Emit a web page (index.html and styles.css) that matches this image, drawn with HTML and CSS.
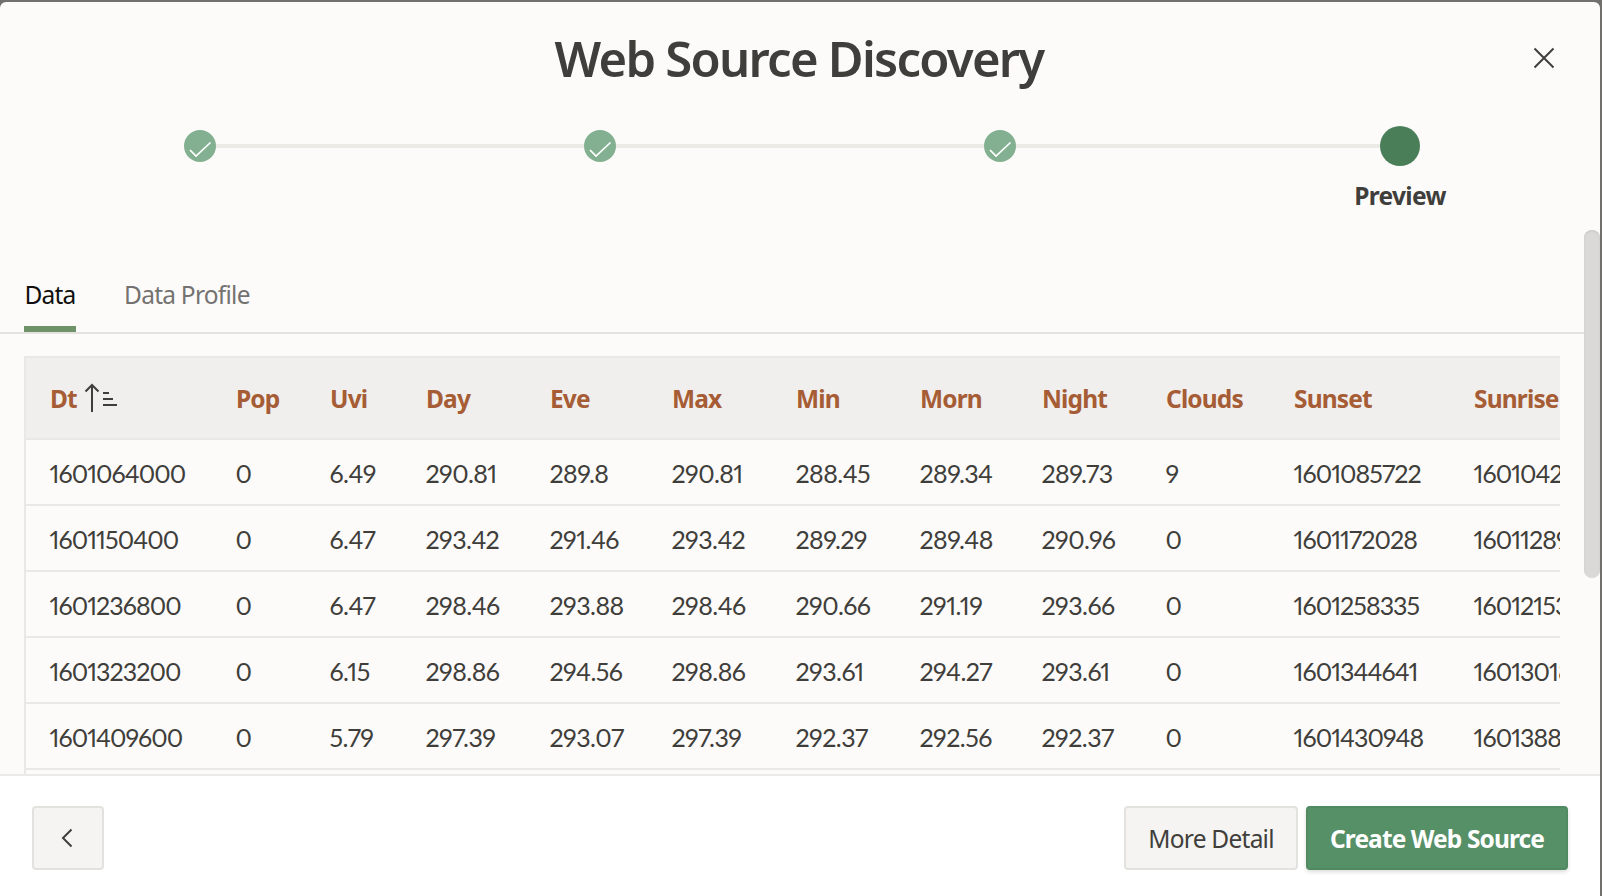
FILE: index.html
```html
<!DOCTYPE html>
<html lang="en">
<head>
<meta charset="utf-8">
<title>Web Source Discovery</title>
<link rel="stylesheet" href="styles.css">
</head>
<body>
<main class="dialog">
  <header class="dialog-head">
    <h1 class="title">Web Source Discovery</h1>
    <button class="close" aria-label="Close"><svg width="22" height="22" viewBox="0 0 22 22"><path d="M1.5 1.5 20.500 20.500M20.500 1.500 1.500 20.500"/></svg></button>
  </header>
  <ol class="steps">
    <li class="step"><span class="dot"><svg width="32" height="32" viewBox="0 0 32 32"><path d="M6 20 12 26 26.500 12.500"/></svg></span></li>
    <li class="step"><span class="dot"><svg width="32" height="32" viewBox="0 0 32 32"><path d="M6 20 12 26 26.500 12.500"/></svg></span></li>
    <li class="step"><span class="dot"><svg width="32" height="32" viewBox="0 0 32 32"><path d="M6 20 12 26 26.500 12.500"/></svg></span></li>
    <li class="step"><span class="dot current"></span><span class="step-label">Preview</span></li>
  </ol>
  <section class="body">
    <div class="content">
      <nav class="tabs"><a class="tab active">Data</a><a class="tab profile">Data Profile</a></nav>
      <div class="report">
        <table class="grid">
          <colgroup><col class="w-dt"><col class="w-pop"><col class="w-uvi"><col class="w-wide"><col class="w-mid"><col class="w-wide"><col class="w-wide"><col class="w-mid"><col class="w-wide"><col class="w-clouds"><col class="w-sun"><col class="w-sun"></colgroup>
          <thead><tr><th><span class="sorted">Dt<svg width="34" height="30" viewBox="0 0 34 30"><path d="M8 29V2M1.500 8.500 8 2l6.500 6.500M19 10h6M19 16h10M19 22h14"/></svg></span></th><th>Pop</th><th>Uvi</th><th>Day</th><th>Eve</th><th>Max</th><th>Min</th><th>Morn</th><th>Night</th><th>Clouds</th><th>Sunset</th><th>Sunrise</th></tr></thead>
          <tbody>
            <tr><td>1601064000</td><td>0</td><td>6.49</td><td>290.81</td><td>289.8</td><td>290.81</td><td>288.45</td><td>289.34</td><td>289.73</td><td>9</td><td>1601085722</td><td>1601042</td></tr>
            <tr><td>1601150400</td><td>0</td><td>6.47</td><td>293.42</td><td>291.46</td><td>293.42</td><td>289.29</td><td>289.48</td><td>290.96</td><td>0</td><td>1601172028</td><td>16011289</td></tr>
            <tr><td>1601236800</td><td>0</td><td>6.47</td><td>298.46</td><td>293.88</td><td>298.46</td><td>290.66</td><td>291.19</td><td>293.66</td><td>0</td><td>1601258335</td><td>16012153</td></tr>
            <tr><td>1601323200</td><td>0</td><td>6.15</td><td>298.86</td><td>294.56</td><td>298.86</td><td>293.61</td><td>294.27</td><td>293.61</td><td>0</td><td>1601344641</td><td>16013018</td></tr>
            <tr><td>1601409600</td><td>0</td><td>5.79</td><td>297.39</td><td>293.07</td><td>297.39</td><td>292.37</td><td>292.56</td><td>292.37</td><td>0</td><td>1601430948</td><td>1601388</td></tr>
            <tr><td></td><td></td><td></td><td></td><td></td><td></td><td></td><td></td><td></td><td></td><td></td><td></td></tr>
          </tbody>
        </table>
      </div>
    </div>
    <div class="scrollbar"><div class="thumb"></div></div>
  </section>
  <footer class="foot">
    <button class="btn back" aria-label="Back"><svg width="12" height="20" viewBox="0 0 12 20"><path d="M10.500 1.500 2 10l8.500 8.500"/></svg></button>
    <button class="btn detail">More Detail</button>
    <button class="btn create">Create Web Source</button>
  </footer>
</main>
</body>
</html>
```
FILE: styles.css
```css
* { box-sizing: border-box; }
body { margin: 0; height: 896px; overflow: hidden; background: #72706c; padding: 2px 2px 0 0; font-family: "Noto Sans", "Open Sans", sans-serif; font-size: 24.5px; color: #403e3b; }
svg { display: block; fill: none; stroke: currentColor; stroke-width: 2; }
button { font: inherit; color: inherit; padding: 0; }
.dialog { height: 894px; display: flex; flex-direction: column; background: #fcfbf9; border-radius: 6px 6px 0 0; overflow: hidden; }
.dialog-head { height: 114px; padding-bottom: 2px; flex: none; display: grid; grid-template-columns: 80px 1fr 80px; align-items: center; }
.title { grid-column: 2; margin: 0 2px 0 0; text-align: center; font-size: 49px; line-height: 68px; font-weight: 650; letter-spacing: -1.75px; }
.close { justify-self: start; margin-left: 13px; border: 0; background: none; }
.steps { flex: none; list-style: none; margin: 0; padding: 8px 0 0; height: 112px; display: grid; grid-template-columns: repeat(4, 1fr); background: linear-gradient(#ebeae7, #ebeae7) 200px 28px / 1200px 4px no-repeat; }
.step { display: flex; flex-direction: column; align-items: center; }
.dot { width: 32px; height: 32px; margin: 6px 0; border-radius: 50%; background: #84b092; color: #fff; }
.dot svg { stroke-width: 1.7; }
.current { width: 40px; height: 40px; margin: 2px 0; background: #4a7e59; }
.step-label { font-weight: 700; line-height: 34px; margin-top: 11px; letter-spacing: -.7px; }
.body { flex: 1; min-height: 0; display: flex; overflow: hidden; }
.content { flex: 1; min-width: 0; }
.tabs { height: 106px; padding: 0 24px; display: flex; align-items: flex-end; gap: 48px; border-bottom: 2px solid #e3e2df; }
.tab { height: 60px; line-height: 46px; letter-spacing: -.75px; border-bottom: 6px solid transparent; color: #747270; }
.active { width: 52px; text-align: center; color: #100f0e; border-color: #6f9268; }
.report { margin: 22px 24px 0; overflow: hidden; border: 2px solid #e9e8e6; border-right: 0; border-bottom: 0; }
.grid { width: 1604px; table-layout: fixed; border-collapse: separate; border-spacing: 0; }
.grid th, .grid td { padding: 0 0 0 24px; text-align: left; white-space: nowrap; border-bottom: 2px solid #e9e8e6; }
.grid th { height: 82px; background: #f0efed; color: #a65d35; font-weight: 700; letter-spacing: -.85px; }
.grid td { height: 66px; padding: 1px 0 0 23.500px; font-family: Lato, "Noto Sans", sans-serif; font-size: 25px; font-variant-numeric: proportional-nums; letter-spacing: -.95px; }
.grid td:nth-child(n+3):nth-child(-n+9) { letter-spacing: -.55px; }
.sorted { display: flex; align-items: center; gap: 8px; }
.sorted svg { color: #403e3b; margin-left: -1px; }
.w-dt { width: 186px; }
.w-pop { width: 94px; }
.w-uvi { width: 96px; }
.w-wide { width: 124px; }
.w-mid { width: 122px; }
.w-clouds { width: 128px; }
.w-sun { width: 180px; }
.scrollbar { width: 16px; padding-top: 2px; }
.thumb { height: 348px; border-radius: 8px; background: #dad9d7; box-shadow: inset 0 1px 2px #c6c5c3; }
.foot { height: 122px; flex: none; border-top: 2px solid #ebeae8; background: #fff; display: flex; align-items: flex-start; padding: 30px 32px; gap: 8px; }
.btn { height: 64px; border: 2px solid #e3e2df; border-radius: 4px; background: #f5f4f2; display: flex; align-items: center; justify-content: center; white-space: nowrap; padding-top: 1px; }
.back { width: 72px; margin-right: auto; }
.back svg { margin-right: 2px; margin-top: -1px; }
.detail { width: 174px; letter-spacing: -.75px; }
.create { width: 262px; border-color: #4f8a60; background: #569067; color: #fff; font-weight: 700; letter-spacing: -.9px; box-shadow: 0 2px 4px rgba(0,0,0,.14); }
```
